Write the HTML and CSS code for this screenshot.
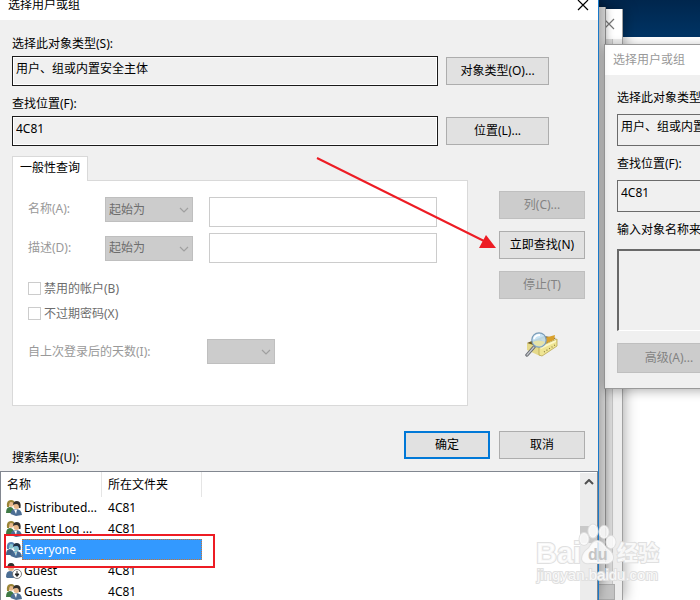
FILE: index.html
```html
<!DOCTYPE html>
<html lang="zh-CN">
<head>
  <meta charset="UTF-8">
  <title>选择用户或组</title>
  <link rel="stylesheet" href="styles.css">
</head>
<body>
  <svg class="symbols" aria-hidden="true">
    <symbol id="chevron" viewBox="0 0 10 6">
      <path d="M1 1 L5 5 L9 1" fill="none" stroke="#a0a0a0" stroke-width="1.2"/>
    </symbol>
    <symbol id="group" viewBox="0 0 16 16">
      <path class="coat-a" d="M0 13 Q0 7 4 7 Q8 7 8 13 Z"/>
      <circle class="face" cx="5" cy="4" r="2.8"/>
      <path class="hair-a" d="M1 7 Q0 0 5 0 Q9 0 8.500 4 Q7 2 5 2 Q3 2 3 7 Z"/>
      <path class="coat-b" d="M4.500 14 Q5 9 10 9 Q15.500 9 16 15 L10 16 Z"/>
      <path class="shirt" d="M8 9.500 L11 9.500 L10 14 Z"/>
      <circle class="face" cx="10.500" cy="6" r="3"/>
      <path class="hair-b" d="M7 5 Q7 1 11 1 Q15.500 1 14.500 8 L13 8 Q13 4 10.500 4 Q8.500 4 7 5 Z"/>
    </symbol>
    <symbol id="guest" viewBox="0 0 16 16">
      <path class="coat-b" d="M0 14 Q0 8 4 8 Q9 8 9 15 L1 15 Z"/>
      <circle class="face" cx="5" cy="5" r="3"/>
      <path class="hair-b" d="M1.500 5 Q1 0 5 0 Q9 0 8.500 5 Q7 3 5 3 Q3 3 1.500 5 Z"/>
      <circle cx="11" cy="11" r="4.500" fill="#fff" stroke="#666" stroke-width="0.800"/>
      <path d="M11 8 V12 M9 11 L11 13.500 L13 11 Z" fill="#222" stroke="#222"/>
    </symbol>
  </svg>

  <div class="desktop">
    <div class="window base-window"></div>
    <div class="window rear-window">
      <div class="titlebar"><button class="close" aria-label="关闭"><svg viewBox="0 0 10 10"><path d="M0 0 L10 10 M10 0 L0 10"/></svg></button></div>
      <div class="rear-body"></div>
      <div class="rear-foot"></div>
    </div>
    <div class="window middle-window"></div>

    <section class="window back-dialog">
      <div class="titlebar">选择用户或组</div>
      <div class="back-body">
        <label for="back-type">选择此对象类型(S):</label>
        <input id="back-type" type="text" value="用户、组或内置安全主体" readonly>
        <label for="back-location">查找位置(F):</label>
        <input id="back-location" type="text" value="4C81" readonly>
        <label for="back-names">输入对象名称来选择</label>
        <textarea id="back-names" readonly></textarea>
        <button disabled>高级(A)...</button>
      </div>
    </section>

    <main class="window dialog">
      <div class="titlebar">
        <span>选择用户或组</span>
        <button class="close" aria-label="关闭"><svg viewBox="0 0 10 10"><path d="M0 0 L10 10 M10 0 L0 10"/></svg></button>
      </div>

      <div class="scope">
        <label for="object-type">选择此对象类型(S):</label>
        <div class="scope-row">
          <input id="object-type" type="text" value="用户、组或内置安全主体" readonly>
          <button>对象类型(O)...</button>
        </div>
        <label for="location">查找位置(F):</label>
        <div class="scope-row">
          <input id="location" type="text" value="4C81" readonly>
          <button>位置(L)...</button>
        </div>
      </div>

      <div class="query">
        <div class="tabs">
          <div class="tab">一般性查询</div>
          <div class="panel">
            <div class="criteria top">
              <label for="name">名称(A):</label>
              <div class="combo"><select aria-label="名称条件" disabled><option>起始为</option></select><svg><use href="#chevron"/></svg></div>
              <input id="name" type="text" disabled>
            </div>
            <div class="criteria">
              <label for="description">描述(D):</label>
              <div class="combo"><select aria-label="描述条件" disabled><option>起始为</option></select><svg><use href="#chevron"/></svg></div>
              <input id="description" type="text" disabled>
            </div>
            <div class="checks">
              <label><input type="checkbox" disabled>禁用的帐户(B)</label>
              <label><input type="checkbox" disabled>不过期密码(X)</label>
            </div>
            <div class="days">
              <label for="days">自上次登录后的天数(I):</label>
              <div class="combo"><select id="days" disabled></select><svg><use href="#chevron"/></svg></div>
            </div>
          </div>
        </div>
        <div class="actions">
          <button disabled>列(C)...</button>
          <button>立即查找(N)</button>
          <button disabled>停止(T)</button>
          <svg class="search-icon" viewBox="0 0 34 28">
            <path d="M2 12 L15 15 L15 25 L2 19 Z" fill="#e5d98a"/>
            <path d="M2 12 L19 5 L31 7 L15 16 Z" fill="#6e5a1c"/>
            <path d="M16 8 L30 4 L29 9 L19 13 Z" fill="#d9a02a"/>
            <path d="M14 16 L32 8 L32 15 L17 25 L14 24 Z" fill="#efe594" stroke="#b9a650" stroke-width="0.800"/>
            <path d="M15 16 L31 9 L31 11 L16 18 Z" fill="#fbf7c8"/>
            <path d="M19 21 L30 14" stroke="#887b3c" stroke-width="1.200" stroke-dasharray="1 2"/>
            <path d="M9 16 L2 24" stroke="#666a70" stroke-width="3.400" stroke-linecap="round"/>
            <path d="M9 16 L2 24" stroke="#c5c8cc" stroke-width="1.200" stroke-linecap="round"/>
            <circle cx="14" cy="9" r="7.200" fill="#c3e2f5" fill-opacity="0.900" stroke="#7c9db8" stroke-width="1.200"/>
            <path d="M8 11 Q13 8 20 11 Q17 16 13 15 Q9 14 8 11 Z" fill="#e6e3a8"/>
            <path d="M9 8 Q10 4 15 4" fill="none" stroke="#fff" stroke-width="1.800"/>
          </svg>
        </div>
      </div>

      <div class="confirm">
        <span>搜索结果(U):</span>
        <div class="confirm-buttons">
          <button class="default">确定</button>
          <button>取消</button>
        </div>
      </div>

      <div class="results">
        <table>
          <colgroup>
            <col class="icon-col"><col class="name-col"><col class="folder-col">
          </colgroup>
          <thead>
            <tr><th colspan="2">名称</th><th>所在文件夹</th></tr>
          </thead>
          <tbody>
            <tr><td><svg><use href="#group"/></svg></td><td>Distributed...</td><td>4C81</td></tr>
            <tr><td><svg><use href="#group"/></svg></td><td>Event Log ...</td><td>4C81</td></tr>
            <tr class="selected"><td><svg><use href="#group"/></svg></td><td>Everyone</td><td></td></tr>
            <tr><td><svg><use href="#guest"/></svg></td><td>Guest</td><td>4C81</td></tr>
            <tr><td><svg><use href="#group"/></svg></td><td>Guests</td><td>4C81</td></tr>
          </tbody>
        </table>
        <div class="scrollbar">
          <svg viewBox="0 0 10 6"><path d="M1 5 L5 1 L9 5" fill="none" stroke="#505050" stroke-width="2"/></svg>
          <div class="thumb"></div>
        </div>
        <div class="highlight"></div>
      </div>
    </main>

    <svg class="arrow" viewBox="0 0 182 94">
      <path d="M1 1 L168 84" stroke="#ed1c24" stroke-width="2"/>
      <path d="M180 91 L170 78 L163 91 Z" fill="#ed1c24"/>
    </svg>

    <svg class="watermark" viewBox="0 0 130 64">
      <g class="mark">
        <text class="brand" x="0" y="39">Bai</text>
        <ellipse cx="48" cy="15" rx="4.500" ry="6"/>
        <ellipse cx="57" cy="7" rx="4.500" ry="6.500"/>
        <ellipse cx="68" cy="8" rx="4.500" ry="6"/>
        <ellipse cx="75" cy="18" rx="4.500" ry="6"/>
        <path d="M61 17 Q66 17 70 24 Q78 29 77 35 Q75 40 68 39 L54 39 Q47 40 46 35 Q46 29 53 24 Q57 17 61 17 Z"/>
        <text class="cn" x="81" y="36">经验</text>
        <text class="site" x="1" y="56">jingyan.baidu.com</text>
      </g>
      <text class="du" x="52" y="36">du</text>
    </svg>
  </div>
</body>
</html>
```
FILE: styles.css
```css
* {
  box-sizing: border-box;
}

body {
  margin: 0;
  font: 12px/16px "Noto Sans", "Noto Sans CJK SC", sans-serif;
  color: #000;
}

button, input, select, textarea {
  font: inherit;
  color: inherit;
  margin: 0;
  border-radius: 0;
}

button {
  height: 28px;
  padding: 0;
  background: #e1e1e1;
  border: 1px solid #adadad;
}

button:disabled {
  background: #ccc;
  border-color: #bfbfbf;
  color: #838383;
}

input[type="text"], textarea {
  display: block;
  width: 100%;
  padding: 0 3px;
  border: 1px solid #6b6b6b;
  background: #f0f0f0;
  outline: none;
}

label {
  white-space: nowrap;
}

.symbols {
  display: none;
}

/* desktop and windows */
.desktop {
  position: relative;
  height: 100vh;
  overflow: hidden;
  background: linear-gradient(#00264d, #003566 40px);
}

.window {
  position: absolute;
}

.titlebar {
  display: flex;
  align-items: center;
  justify-content: space-between;
  height: 30px;
  padding: 0 8px;
  background: #fff;
}

.close {
  display: flex;
  height: 10px;
  border: 0;
  background: none;
}

.close svg {
  width: 10px;
  height: 10px;
  overflow: visible;
  fill: none;
  stroke: #000;
  stroke-width: 1.2;
}

.base-window {
  top: 37px;
  right: 0;
  bottom: 0;
  width: 101px;
  background: #fff;
}

.rear-window {
  top: 9px;
  right: 77px;
  bottom: 0;
  width: 300px;
  border-right: 1px solid #a0a0a0;
  background: #ededed;
  box-shadow: 0 0 14px rgba(0, 0, 0, 0.4);
}

.rear-window .titlebar {
  justify-content: flex-end;
}

.rear-window .close svg {
  stroke: #777;
}

.rear-body {
  height: calc(100% - 46px);
  margin-right: 9px;
  background: #dcdcdc;
  border-right: 1px solid #c4c4c4;
}

.rear-foot {
  height: 16px;
  margin-right: 7px;
  background: #c2c2c2;
  border: 1px solid #aaa;
}

.middle-window {
  top: 7px;
  right: 94px;
  bottom: 20px;
  width: 200px;
  border-right: 1px solid #8a8a8a;
  background: #d0d0d0;
  box-shadow: 0 0 8px rgba(0, 0, 0, 0.3);
}

.back-dialog {
  top: 44px;
  left: calc(100% - 96px);
  width: 456px;
  border: 1px solid #999;
  background: #f0f0f0;
  box-shadow: 0 2px 10px rgba(0, 0, 0, 0.3);
}

.back-dialog .titlebar {
  color: #999;
}

.back-body {
  display: flex;
  flex-direction: column;
  padding: 15px 12px;
}

.back-body input[type="text"] {
  height: 32px;
  margin: 8px 0 10px;
  padding-bottom: 8px;
}

.back-body textarea {
  height: 82px;
  margin: 11px 0 12px;
  border-color: #696969 #fff #fff #696969;
  border-width: 2px 1px 1px 2px;
  resize: none;
}

.back-body button {
  width: 104px;
  height: 30px;
}

/* the titlebar runs off the top of the screen */
.dialog {
  top: -10px;
  left: 0;
  right: 101px;
  bottom: 0;
  display: flex;
  flex-direction: column;
  border-right: 1px solid #1979ca;
  background: #f0f0f0;
  box-shadow: 0 0 10px rgba(0, 0, 0, 0.3);
}

.dialog .titlebar {
  padding-right: 10px;
}

.scope {
  padding: 16px 49px 0 12px;
}

.scope label {
  display: block;
}

.scope-row {
  display: flex;
  align-items: center;
  gap: 8px;
  margin: 4px 0 10px;
}

.scope-row input[type="text"] {
  flex: 1;
  height: 30px;
  padding-bottom: 6px;
  border-color: #1a1a1a;
  box-shadow: inset 0 0 0 1px #fff;
}

.scope-row button {
  width: 103px;
}

.query {
  display: flex;
  gap: 31px;
  padding: 0 13px 0 12px;
}

.tabs {
  flex: 1;
}

.tab {
  position: relative;
  z-index: 1;
  width: 76px;
  height: 25px;
  padding: 3px 7px;
  background: #fff;
  border: 1px solid #d9d9d9;
  border-bottom: 0;
  white-space: nowrap;
}

.panel {
  margin-top: -1px;
  padding: 16px 30px 41px 15px;
  background: #fff;
  border: 1px solid #d9d9d9;
  color: #999;
}

.criteria {
  display: grid;
  grid-template-columns: 77px 88px 1fr;
  align-items: center;
}

.criteria.top {
  align-items: start;
  margin-bottom: 6px;
  line-height: 24px;
}

.criteria input[type="text"] {
  width: auto;
  height: 30px;
  margin-left: 16px;
  background: #fff;
  border-color: #ccc;
}

.combo {
  position: relative;
}

.combo select {
  display: block;
  width: 100%;
  height: 25px;
  padding: 0 3px;
  appearance: none;
  background: #ccc;
  border: 1px solid #bfbfbf;
  color: #6d6d6d;
  opacity: 1;
}

.combo svg {
  position: absolute;
  top: 10px;
  right: 4px;
  width: 10px;
  height: 6px;
}

.checks {
  margin-top: 13px;
  color: #6d6d6d;
}

.checks label {
  display: flex;
  align-items: center;
  gap: 3px;
  height: 25px;
}

.checks input {
  width: 13px;
  height: 13px;
  appearance: none;
  background: #fff;
  border: 1px solid #ccc;
}

.days {
  display: grid;
  grid-template-columns: 179px 68px;
  align-items: center;
  margin-top: 13px;
}

.actions {
  display: flex;
  flex-direction: column;
  gap: 12px;
  width: 86px;
  padding-top: 35px;
}

.search-icon {
  width: 34px;
  height: 28px;
  margin: 20px 0 0 26px;
}

.confirm {
  display: flex;
  align-items: flex-end;
  justify-content: space-between;
  padding: 25px 13px 5px 12px;
}

.confirm-buttons {
  display: flex;
  gap: 9px;
  padding-bottom: 7px;
}

.confirm-buttons button {
  width: 86px;
}

button.default {
  border: 2px solid #0078d7;
}

/* search results */
.results {
  position: relative;
  flex: 1;
  display: flex;
  justify-content: space-between;
  align-items: flex-start;
  min-height: 0;
  background: #fff;
  border: 1px solid #828790;
  border-bottom: 0;
}

.results table {
  width: 201px;
  table-layout: fixed;
  border-collapse: separate;
  border-spacing: 0;
}

.icon-col { width: 21px; }
.name-col { width: 80px; }
.folder-col { width: 100px; }

.results th {
  height: 25px;
  padding: 0 6px;
  border-right: 1px solid #e5e5e5;
  font-weight: normal;
  text-align: left;
}

.results td {
  height: 21px;
  padding: 0 0 0 6px;
  white-space: nowrap;
}

.results td:first-child {
  padding-left: 5px;
}

.results td:nth-child(2) {
  padding-left: 2px;
}

.results td svg {
  display: block;
  width: 16px;
  height: 16px;
}

.face { fill: #e8b98c; }
.hair-a { fill: #9a8436; }
.hair-b { fill: #33302c; }
.coat-a { fill: #3f7a45; }
.coat-b { fill: #4c6e94; }
.shirt { fill: #fff; }

.selected td:not(:first-child) {
  background: #3399ff;
  border: 1px dotted #c87533;
  border-width: 1px 0;
  color: #fff;
}

.results .selected td:nth-child(2) {
  border-left-width: 1px;
  padding-left: 1px;
}

.selected td:last-child {
  border-right-width: 1px;
}

.selected svg {
  filter: sepia(1) hue-rotate(170deg) saturate(2) brightness(0.8);
}

.scrollbar {
  display: flex;
  flex-direction: column;
  align-items: center;
  align-self: stretch;
  width: 17px;
  margin: 1px 0 0;
  background: #ececec;
}

.scrollbar svg {
  width: 10px;
  height: 6px;
  margin: 6px 0 41px;
}

.thumb {
  width: 100%;
  height: 17px;
  background: #c9c9c9;
}

.highlight {
  position: absolute;
  top: 62px;
  left: 3px;
  width: 211px;
  height: 34px;
  border: 2px solid #ed1c24;
}

/* annotations over the windows */
.arrow {
  position: absolute;
  top: 157px;
  right: 202px;
  width: 182px;
  height: 94px;
}

.watermark {
  position: absolute;
  right: 34px;
  bottom: 12px;
  width: 130px;
  height: 64px;
  overflow: visible;
}

.mark {
  fill: #fff;
  fill-opacity: 0.8;
  stroke: #e0e0e0;
  stroke-width: 2;
  paint-order: stroke;
}

.brand {
  font: bold 29px "Liberation Sans", sans-serif;
}

.cn {
  font: bold 21px "Noto Sans CJK SC", sans-serif;
}

.site {
  font: 15px "Liberation Sans", sans-serif;
}

.du {
  font: bold 16px "Liberation Sans", sans-serif;
  fill: #c4c4c4;
}
```
